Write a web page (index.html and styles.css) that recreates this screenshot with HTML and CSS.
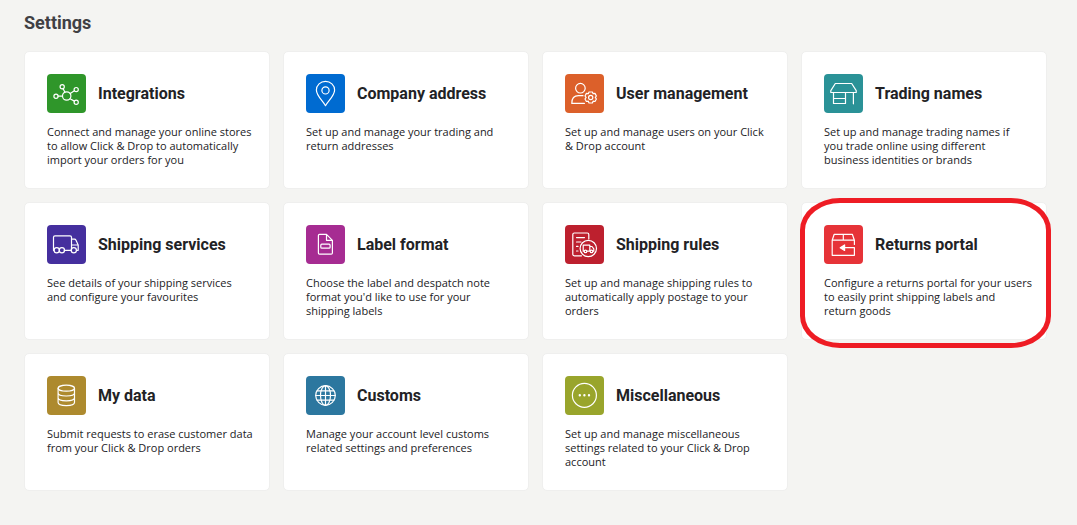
FILE: index.html
```html
<!DOCTYPE html>
<html lang="en">

<head>
    <meta charset="UTF-8">
    <meta name="viewport" content="width=device-width, initial-scale=1.0">
    <title>Settings</title>
    <link rel="stylesheet" href="styles.css">
</head>

<body>
    <main class="settings">
        <h1>Settings</h1>

        <div class="card-grid">
            <a class="card" href="#integrations">
                <div class="card-header">
                    <svg class="icon icon-green" viewBox="0 0 39 39" aria-hidden="true">
                        <circle cx="19.7" cy="22" r="4.2" />
                        <circle cx="9" cy="22.3" r="2.1" />
                        <circle cx="15.2" cy="12.7" r="2.1" />
                        <circle cx="29.2" cy="15.6" r="2.1" />
                        <circle cx="29.2" cy="28.2" r="2.1" />
                        <path d="M11.1 22.2H15.5M16 14.6L18 18.2M27.4 16.7L23.2 19.6M27.4 27.1L23 24.7" />
                    </svg>
                    <h2>Integrations</h2>
                </div>
                <p>Connect and manage your online stores to allow Click &amp; Drop to automatically import your orders for you</p>
            </a>

            <a class="card" href="#company-address">
                <div class="card-header">
                    <svg class="icon icon-blue" viewBox="0 0 39 39" aria-hidden="true">
                        <path d="M19.5 31.7C16 26 10.4 21.5 10.4 16A9.1 8.7 0 0 1 28.6 16C28.6 21.5 23 26 19.5 31.7Z" />
                        <circle cx="19.5" cy="16.4" r="3.6" />
                    </svg>
                    <h2>Company address</h2>
                </div>
                <p>Set up and manage your trading and return addresses</p>
            </a>

            <a class="card" href="#user-management">
                <div class="card-header">
                    <svg class="icon icon-orange" viewBox="0 0 39 39" aria-hidden="true">
                        <circle cx="15.4" cy="14.2" r="4.8" />
                        <path d="M19.4 29.4H6.8C6.8 24.5 9.5 21.7 13.5 21.7H18" />
                        <path d="M24 18L27.4 18L28.1 19.7L30 19.4L31.4 22L30.3 23.4L31.4 25L30 27.5L28.1 27.2L27.4 29H24L23.3 27.2L21.4 27.5L20 25L21.1 23.4L20 22L21.4 19.4L23.3 19.7Z" />
                        <circle cx="25.7" cy="23.5" r="2.1" />
                    </svg>
                    <h2>User management</h2>
                </div>
                <p>Set up and manage users on your Click &amp; Drop account</p>
            </a>

            <a class="card" href="#trading-names">
                <div class="card-header">
                    <svg class="icon icon-teal" viewBox="0 0 39 39" aria-hidden="true">
                        <path d="M11.3 9.5H27.7L32.2 16.6V18.5H6.8V16.6Z" />
                        <path d="M9.5 18.5V29.5H21.5V18.5M9.5 24.5H21.5M29.4 18.5V29.8" />
                    </svg>
                    <h2>Trading names</h2>
                </div>
                <p>Set up and manage trading names if<br> you trade online using different<br> business identities or brands</p>
            </a>

            <a class="card" href="#shipping-services">
                <div class="card-header">
                    <svg class="icon icon-indigo" viewBox="0 0 39 39" aria-hidden="true">
                        <path d="M7 25.3H6.5V12.2Q6.5 10.8 8 10.8H23Q24.5 10.8 24.5 12.2V25.3M17.2 25.3H23.8M24.5 14.2H27.5Q28.5 14.2 29 15.2L31.2 20V25.3H29.6M24.5 20H31" />
                        <circle cx="9.7" cy="25.3" r="2.6" />
                        <circle cx="14.9" cy="25.3" r="2.6" />
                        <circle cx="26.8" cy="25.3" r="2.6" />
                    </svg>
                    <h2>Shipping services</h2>
                </div>
                <p>See details of your shipping services<br> and configure your favourites</p>
            </a>

            <a class="card" href="#label-format">
                <div class="card-header">
                    <svg class="icon icon-purple" viewBox="0 0 39 39" aria-hidden="true">
                        <path d="M20.5 9.4H13.5Q12.4 9.4 12.4 10.5V28Q12.4 29.2 13.5 29.2H25.2Q26.4 29.2 26.4 28V15.3ZV15.3H26.4" />
                        <rect x="14.8" y="19.2" width="9.3" height="4" rx="1" />
                    </svg>
                    <h2>Label format</h2>
                </div>
                <p>Choose the label and despatch note format you'd like to use for your shipping labels</p>
            </a>

            <a class="card" href="#shipping-rules">
                <div class="card-header">
                    <svg class="icon icon-crimson" viewBox="0 0 39 39" aria-hidden="true">
                        <path d="M16.5 30.8H9.3Q7.8 30.8 7.8 29.3V9.5Q7.8 8 9.3 8H22.3Q23.8 8 23.8 9.5V14M11.5 12.6H19.5M11.5 17H16M11.5 21.4H13M11.5 26H13" />
                        <circle cx="23.3" cy="23.5" r="8.2" />
                        <path d="M19 26.2H18.2V20.2H24.8V26.2H22M24.8 21.5H27L28.8 23.8V26.2H28" />
                        <circle cx="20.5" cy="26.4" r="1.3" />
                        <circle cx="26.5" cy="26.4" r="1.3" />
                    </svg>
                    <h2>Shipping rules</h2>
                </div>
                <p>Set up and manage shipping rules to automatically apply postage to your orders</p>
            </a>

            <a class="card card-highlight" href="#returns-portal">
                <div class="card-header">
                    <svg class="icon icon-red" viewBox="0 0 39 39" aria-hidden="true">
                        <path d="M30.4 19.5V15.2L28.3 9.3H10.2L8.2 15.2V30.3H30.4V22.7H19M8.2 15.2H30.4M19.3 9.3V15.2" />
                        <path class="solid" d="M16.2 22.7L20.6 19.9V25.5Z" />
                    </svg>
                    <h2>Returns portal</h2>
                </div>
                <p>Configure a returns portal for your users<br> to easily print shipping labels and<br> return goods</p>
            </a>

            <a class="card" href="#my-data">
                <div class="card-header">
                    <svg class="icon icon-gold" viewBox="0 0 39 39" aria-hidden="true">
                        <ellipse cx="19.3" cy="12.2" rx="8.2" ry="3" />
                        <path d="M11.1 12.2V26.5C11.1 30.6 27.5 30.6 27.5 26.5V12.2M11.1 17C11.1 21 27.5 21 27.5 17M11.1 21.8C11.1 25.8 27.5 25.8 27.5 21.8" />
                    </svg>
                    <h2>My data</h2>
                </div>
                <p>Submit requests to erase customer data from your Click &amp; Drop orders</p>
            </a>

            <a class="card" href="#customs">
                <div class="card-header">
                    <svg class="icon icon-steel" viewBox="0 0 39 39" aria-hidden="true">
                        <circle cx="19.5" cy="19.5" r="9.8" />
                        <ellipse cx="19.5" cy="19.5" rx="5" ry="9.8" />
                        <path d="M19.5 9.7V29.3M11 14.8H28M9.7 19.5H29.3M11 24.2H28" />
                    </svg>
                    <h2>Customs</h2>
                </div>
                <p>Manage your account level customs related settings and preferences</p>
            </a>

            <a class="card" href="#miscellaneous">
                <div class="card-header">
                    <svg class="icon icon-olive" viewBox="0 0 39 39" aria-hidden="true">
                        <circle cx="19.4" cy="19.3" r="12" />
                        <circle class="solid" cx="14.8" cy="19.3" r="0.6" />
                        <circle class="solid" cx="19.4" cy="19.3" r="0.6" />
                        <circle class="solid" cx="24" cy="19.3" r="0.6" />
                    </svg>
                    <h2>Miscellaneous</h2>
                </div>
                <p>Set up and manage miscellaneous settings related to your Click &amp; Drop account</p>
            </a>
        </div>
    </main>
</body>

</html>
```
FILE: styles.css
```css
* {
    box-sizing: border-box;
}

body {
    margin: 0;
    background: #f4f4f2;
    color: #222225;
    font-family: "Open Sans", sans-serif;
}

.settings {
    padding: 13px 30px 12px 24px;
}

h1 {
    margin: 0 0 18px;
    color: #404044;
    font-family: Roboto, Arial, sans-serif;
    font-size: 18px;
    font-weight: 700;
    line-height: 20px;
}

.card-grid {
    display: grid;
    grid-template-columns: repeat(4, 1fr);
    grid-auto-rows: 1fr;
    gap: 13px;
}

.card {
    position: relative;
    padding: 22px 13px 21px 22px;
    background: #fff;
    border: 1px solid #efefee;
    border-radius: 5px;
    color: inherit;
    text-decoration: none;
}

.card-header {
    display: flex;
    align-items: center;
    gap: 12px;
    margin-bottom: 12px;
}

.card h2 {
    margin: 0;
    font-family: Roboto, Arial, sans-serif;
    font-size: 16px;
    font-weight: 700;
    line-height: 20px;
}

.card p {
    margin: 0;
    font-size: 11px;
    line-height: 14px;
}

/* red ring around the card */
.card-highlight::after {
    content: "";
    position: absolute;
    inset: -5px -5px -9px -2px;
    border: 5px solid #ee1c24;
    border-radius: 40px / 32px;
    pointer-events: none;
}

.icon {
    flex: none;
    width: 39px;
    height: 39px;
    border-radius: 4px;
    fill: none;
    stroke: #fff;
    stroke-width: 1.2;
    stroke-linecap: round;
    stroke-linejoin: round;
}

.icon .solid {
    fill: #fff;
}

.icon-green { background: #2f962a; }
.icon-blue { background: #006bd1; }
.icon-orange { background: #dc602a; }
.icon-teal { background: #2a9297; }
.icon-indigo { background: #452f9e; }
.icon-purple { background: #a62c92; }
.icon-crimson { background: #bd202e; }
.icon-red { background: #e63338; }
.icon-gold { background: #ad8a2e; }
.icon-steel { background: #2c779f; }
.icon-olive { background: #99a52c; }
```
